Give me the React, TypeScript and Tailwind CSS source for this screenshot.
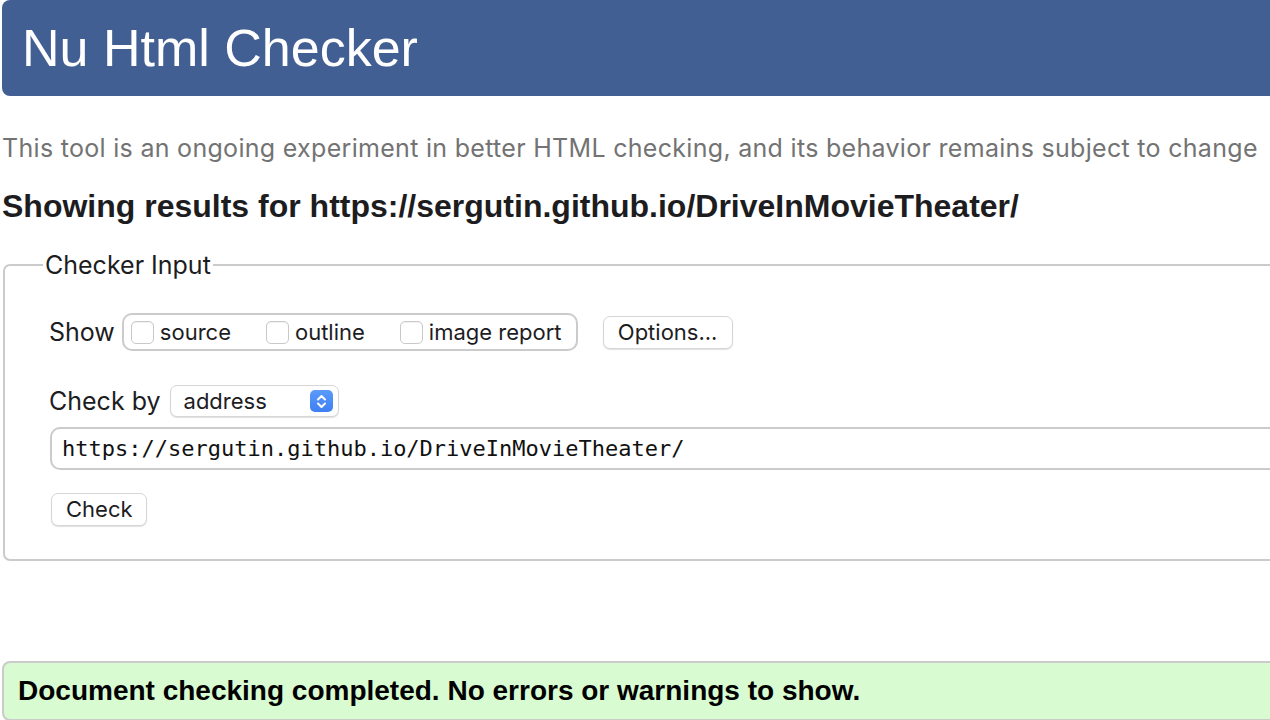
import { Fragment } from "react";

const Box = () => (
  <span className="inline-block h-[23px] w-[23px] shrink-0 rounded-[5px] border border-[#c9c9c9] bg-white shadow-[inset_0_1px_1px_rgba(0,0,0,0.06)]" />
);

const Chevrons = () => (
  <span className="flex h-[22px] w-[23px] items-center justify-center rounded-[5px] bg-[linear-gradient(#5b9bfb,#3f7ff2)]">
    <svg width="11" height="15" viewBox="0 0 11 15" fill="none" stroke="white" strokeWidth="2" strokeLinecap="round" strokeLinejoin="round">
      <path d="M2 5.5 L5.5 2 L9 5.5" />
      <path d="M2 9.5 L5.5 13 L9 9.5" />
    </svg>
  </span>
);

const Button = ({ label, width }: { label: string; width: string }) => (
  <button
    className={`flex h-[33px] items-center rounded-[7px] border border-[#d6d6d6] bg-white pl-[14px] text-[22px] text-[#1d1d1f] shadow-[0_1px_1px_rgba(0,0,0,0.12)] ${width}`}
  >
    {label}
  </button>
);

const options = ["source", "outline", "image report"];

export default function App() {
  return (
    <div className="h-[720px] w-[1270px] overflow-hidden bg-white font-['Inter','Noto_Sans',sans-serif] text-[#1d1d1f]">
      <div className="w-[1320px] pl-[2px]">
        <div className="flex h-[96px] items-center rounded-l-[8px] bg-[#425f93] pl-[20px]">
          <h1 className="font-['Liberation_Sans',Arial,sans-serif] text-[52px] leading-[52px] text-white">
            Nu Html Checker
          </h1>
        </div>

        <p className="mt-[38px] text-[25px] leading-[28px] tracking-[0.3px] text-[#737373]">
          This tool is an ongoing experiment in better HTML checking, and its behavior remains subject to change
        </p>

        <h2 className="mt-[27px] font-['Liberation_Sans',Arial,sans-serif] text-[32px] font-bold leading-[34px] text-[#1d1d1f]">
          Showing results for https://sergutin.github.io/DriveInMovieTheater/
        </h2>

        <fieldset className="mt-[28px] ml-[1px] h-[310px] rounded-[7px] border-2 border-[#cbcbcb] pl-[38px]">
          <legend className="px-[2px] text-[25px] leading-[28px]">Checker Input</legend>

          <div className="-ml-[36px] pl-[42px]">
            <div className="mt-[34px] flex items-center">
              <span className="text-[25px] leading-[28px]">Show</span>
              <div className="ml-[7px] flex h-[38px] w-[456px] items-center rounded-[10px] border-2 border-[#cbcbcb] pl-[7px]">
                {options.map((o, i) => (
                  <Fragment key={o}>
                    <label className={`flex items-center gap-[6px] ${i > 0 ? "ml-[35px]" : ""}`}>
                      <Box />
                      <span className="text-[22px] leading-[24px]">{o}</span>
                    </label>
                  </Fragment>
                ))}
              </div>
              <div className="ml-[25px]">
                <Button label="Options..." width="w-[130px]" />
              </div>
            </div>

            <div className="mt-[34px] flex items-center">
              <span className="text-[25px] leading-[28px]">Check by</span>
              <div className="ml-[9px] flex h-[32px] w-[169px] items-center justify-between rounded-[7px] border border-[#d6d6d6] bg-white pl-[13px] pr-[5px] shadow-[0_1px_1px_rgba(0,0,0,0.12)]">
                <span className="text-[22px]">address</span>
                <Chevrons />
              </div>
            </div>

            <div className="mt-[10px] ml-[1px] flex h-[43px] items-center rounded-[10px] border-2 border-[#cbcbcb] pl-[10px]">
              <span className="font-['DejaVu_Sans_Mono',monospace] text-[22px] text-[#111]">
                https://sergutin.github.io/DriveInMovieTheater/
              </span>
            </div>

            <div className="mt-[23px] ml-[2px]">
              <Button label="Check" width="w-[96px]" />
            </div>
          </div>
        </fieldset>

        <div className="mt-[100px] flex h-[60px] items-center rounded-[8px] border-2 border-[#cbcbcb] bg-[#d8fbd1] pl-[14px]">
          <p className="font-['Liberation_Sans',Arial,sans-serif] text-[28px] font-bold text-black">
            Document checking completed. No errors or warnings to show.
          </p>
        </div>
      </div>
    </div>
  );
}
